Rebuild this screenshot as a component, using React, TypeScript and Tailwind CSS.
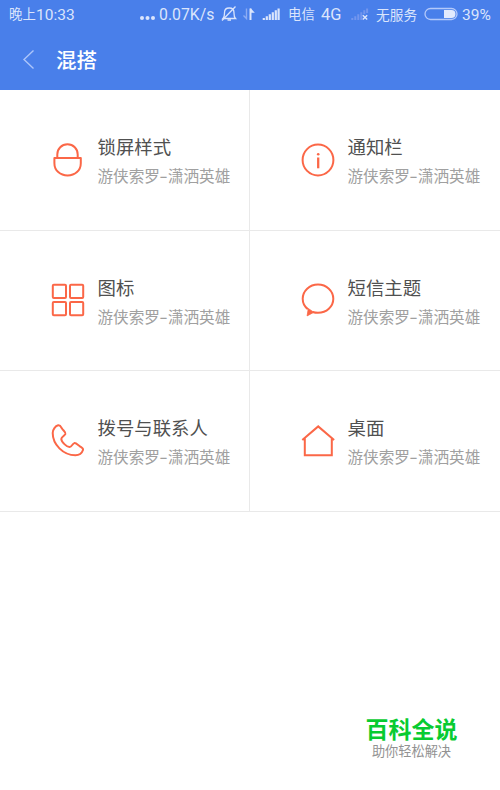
import React from "react";

const SUBTITLE = ["游侠索罗", "潇洒英雄"];

function LockIcon() {
  return (
    <>
      <path d="M6.3 15V11.5C6.3 5.6 10.7 1.3 16.5 1.3S26.7 5.6 26.7 11.5V15" />
      <path d="M3.4 15.1H29.8V20.2C29.8 27.5 24 32.5 16.6 32.5S3.4 27.5 3.4 20.2Z" />
    </>
  );
}

function InfoIcon() {
  return (
    <>
      <circle cx="17" cy="17" r="15.4" />
      <path d="M17.2 14.5V25.3" strokeWidth="2.3" />
      <circle cx="17.2" cy="11.2" r="1.3" fill="currentColor" stroke="none" />
    </>
  );
}

function GridIcon() {
  return (
    <>
      <rect x="1.8" y="1.7" width="13.2" height="13.2" rx="1" />
      <rect x="19" y="1.7" width="13.2" height="13.2" rx="1" />
      <rect x="1.8" y="19" width="13.2" height="13.2" rx="1" />
      <rect x="19" y="19" width="13.2" height="13.2" rx="1" />
    </>
  );
}

function ChatIcon() {
  return (
    <>
      <path d="M6.8 26.1C3.6 23.7 1.7 19.9 1.7 15.8C1.7 7.9 8.5 1.5 17 1.5S32.3 7.9 32.3 15.8S25.5 29.8 17 29.8C15.1 29.8 13.3 29.5 11.6 29" />
      <path d="M7.3 25.5L6.1 32.9L12.8 29.3Z" fill="currentColor" strokeWidth="0.8" />
    </>
  );
}

function PhoneIcon() {
  return (
    <path d="M7.2 2.3C8.8 1.9 9.8 3.4 10.8 5.2C12 7.4 15 9.2 14.4 11C13.8 12.6 10.3 13.8 10.3 15.9C10.3 18.8 15.8 24.2 18.6 24C20.9 23.8 21.4 20.6 23.4 20.1C25.2 19.8 27 22.1 28.9 23.3C30.8 24.5 32.6 25.4 32 27C31.1 29.6 28.2 32.2 24.4 32.2C12 32.2 1.7 21.3 1.7 10C1.7 6.5 4.4 3 7.2 2.3Z" />
  );
}

function HomeIcon() {
  return (
    <path
      d="M1.3 17L17.2 3.4L33.1 17M3.8 15.3V32.2H30.8V15.3"
      strokeLinejoin="miter"
    />
  );
}

const ITEMS = [
  { title: "锁屏样式", icon: <LockIcon /> },
  { title: "通知栏", icon: <InfoIcon /> },
  { title: "图标", icon: <GridIcon /> },
  { title: "短信主题", icon: <ChatIcon /> },
  { title: "拨号与联系人", icon: <PhoneIcon /> },
  { title: "桌面", icon: <HomeIcon /> },
];

function StatusBar() {
  return (
    <div className="flex h-[30px] items-center whitespace-nowrap pl-[9px] font-['Roboto','Noto_Sans_CJK_SC',sans-serif] text-[15.5px] leading-[30px] text-[#dbe5fc]">
      <span className="w-[27px] shrink-0 text-[13.4px]">晚上</span>
      <span className="w-[103px] shrink-0">10:33</span>
      <svg className="h-[30px] w-[20px] shrink-0" viewBox="139 0 20 30" fill="currentColor">
        <circle cx="142" cy="18" r="2" />
        <circle cx="147.5" cy="18" r="2" />
        <circle cx="153" cy="18" r="2" />
      </svg>
      <span className="w-[60px] shrink-0 text-[15.8px]">0.07K/s</span>
      <svg className="h-[30px] w-[69px] shrink-0" viewBox="219 0 69 30" fill="none" stroke="currentColor" strokeWidth="1.3">
        <path d="M223 18.5C224.6 17 224.5 15.2 224.5 12.8C224.5 9.8 226.5 8 229.2 8S234 9.8 234 12.8C234 15.2 233.9 17 235.5 18.5Z" />
        <path d="M227.5 20H231M222 20.5L235.5 6.5" />
        <path d="M246.5 8.5V18.5L243.5 15.5" stroke="#8cacf4" strokeWidth="1.4" />
        <path d="M250.5 20V8.5" strokeWidth="2" />
        <path d="M250.5 8L254.8 12.8H250.5Z" fill="currentColor" stroke="none" />
        <path d="M263.8 20V18M266.8 20V16.3M269.8 20V14.3M272.8 20V12.3M275.8 20V10.3M278.6 20V8.5" strokeWidth="2.2" />
      </svg>
      <span className="w-[33px] shrink-0 text-[13.4px]">电信</span>
      <span className="w-[29px] shrink-0 text-[16.4px]">4G</span>
      <svg className="h-[30px] w-[26px] shrink-0" viewBox="350 0 26 30" fill="none">
        <path d="M352.3 20V18M355.3 20V16.3M358.3 20V14.3M361.3 20V12.3M364.3 14V10.3M367.1 13V8.5" stroke="#7396ee" strokeWidth="2" />
        <path d="M362.8 15.2L367.2 19.6M367.2 15.2L362.8 19.6" stroke="currentColor" strokeWidth="1.4" />
      </svg>
      <span className="w-[48px] shrink-0 text-[13.7px]">无服务</span>
      <svg className="h-[30px] w-[38px] shrink-0" viewBox="424 0 38 30" fill="none">
        <rect x="425" y="8.5" width="32" height="11" rx="5.5" stroke="#b4c9fa" strokeWidth="1.3" />
        <path d="M444 10H451.5A4 4 0 0 1 451.5 18H444Z" fill="#e2eafd" />
      </svg>
      <span className="text-[15.5px]">39%</span>
    </div>
  );
}

export default function App() {
  return (
    <div className="flex h-[790px] w-[500px] flex-col overflow-hidden bg-white font-['Inter','Noto_Sans_CJK_SC',sans-serif]">
      <header className="h-[90px] shrink-0 bg-[#497fea]">
        <StatusBar />
        <div className="flex h-[60px] items-center pl-[22px] text-white">
          <svg className="h-5 w-[34px]" viewBox="0 0 34 20" fill="none" stroke="#acc5fa" strokeWidth="1.4">
            <path d="M11.5 0.5L2 9.5L11.5 18.5" />
          </svg>
          <h1 className="pt-[2px] text-[20.5px] font-medium leading-[30px]">混搭</h1>
        </div>
      </header>

      <main className="grid shrink-0 grid-cols-2">
        {ITEMS.map(({ title, icon }, i) => (
          <section
            key={title}
            className={`flex border-b border-[#e9e9e9] pl-[51px] pt-[43px] ${i % 2 === 0 ? "border-r" : ""} ${i === 2 || i === 3 ? "h-[140px]" : "h-[141px]"}`}
          >
            <svg
              className={`mt-[9.5px] h-[35px] w-[35px] shrink-0 text-[#fb6747] ${i < 2 ? "" : "-translate-y-px"}`}
              viewBox="0 0 35 35"
              fill="none"
              stroke="currentColor"
              strokeWidth="2"
              strokeLinejoin="round"
            >
              {icon}
            </svg>
            <div className="ml-[11.5px] whitespace-nowrap">
              <h2 className="text-[18.4px] leading-7 text-[#505050]">{title}</h2>
              <p className="flex text-[15.6px] leading-[31px] text-[#a0a0a0]">
                {SUBTITLE[0]}
                <span className="flex w-2 justify-center">
                  <span className="scale-x-[1.25]">-</span>
                </span>
                {SUBTITLE[1]}
              </p>
            </div>
          </section>
        ))}
      </main>

      <footer className="mt-auto mb-[31px] ml-[365px] w-[93px] whitespace-nowrap text-center">
        <p className="text-[23px] font-bold leading-[28px] text-[#08cb31]">百科全说</p>
        <p className="text-[13.2px] leading-[15px] text-[#929292]">助你轻松解决</p>
      </footer>
    </div>
  );
}
